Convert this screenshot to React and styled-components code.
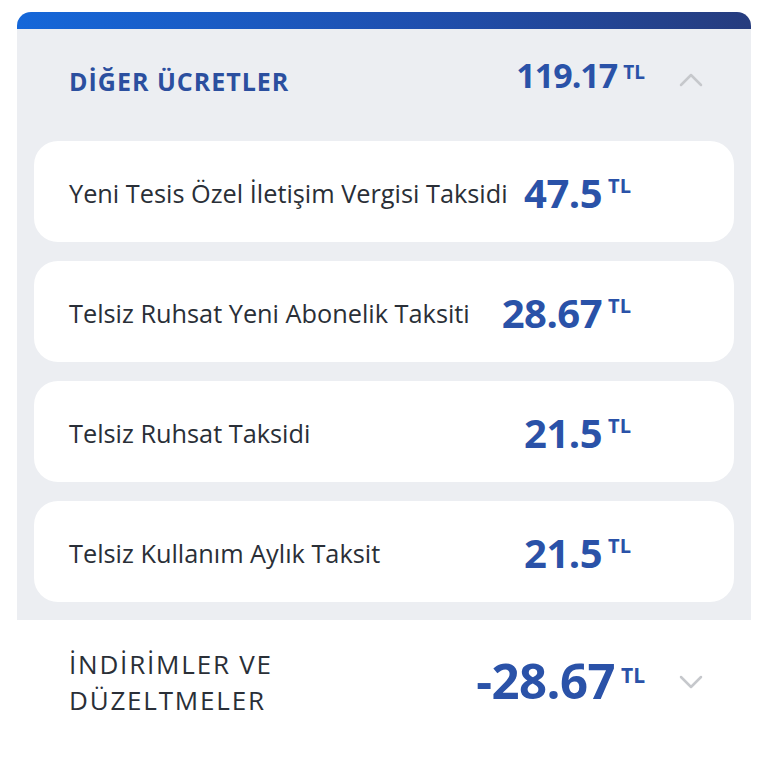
import React from 'react'
import styled, { createGlobalStyle } from 'styled-components'

const colors = {
  blue: '#2a52a8',
  navy: '#2b4f9f',
  text: '#2a2f37',
  panel: '#eceef2',
  chevron: '#c6c8cc',
}

const GlobalStyle = createGlobalStyle`
  body {
    margin: 0;
    background: #ffffff;
    font-family: "Open Sans", "Noto Sans", sans-serif;
    font-stretch: 92%;
    color: ${colors.text};
  }
`

const items = [
  { label: 'Yeni Tesis Özel İletişim Vergisi Taksidi', value: '47.5' },
  { label: 'Telsiz Ruhsat Yeni Abonelik Taksiti', value: '28.67' },
  { label: 'Telsiz Ruhsat Taksidi', value: '21.5' },
  { label: 'Telsiz Kullanım Aylık Taksit', value: '21.5' },
]

// value/unit font sizes, how far the group is raised, and how far TL sits below the digit tops
const sizes = {
  small: { value: 34, unit: 19, lift: 10, drop: 2, spacing: -1 },
  medium: { value: 40, unit: 20, lift: -3, drop: 0, spacing: -0.5 },
  large: { value: 49, unit: 21, lift: 3, drop: 4, spacing: -0.5 },
}

function Amount({ value, size = 'medium' }) {
  return (
    <AmountWrap $size={size}>
      <Value $size={size}>{value}</Value>
      <Unit $size={size}>TL</Unit>
    </AmountWrap>
  )
}

function Chevron({ up }) {
  return (
    <ChevronIcon width="24" height="14" viewBox="0 0 24 14" $up={up}>
      <polyline points="2,2 12,12 22,2" />
    </ChevronIcon>
  )
}

export default function App() {
  return (
    <Page>
      <GlobalStyle />
      <Section>
        <TopBar />
        <Panel>
          <HeaderRow>
            <Title>DİĞER ÜCRETLER</Title>
            <Amount value="119.17" size="small" />
            <Chevron up />
          </HeaderRow>
          <CardList>
            {items.map((item, i) => (
              <Card key={i}>
                <Label>{item.label}</Label>
                <Amount value={item.value} />
              </Card>
            ))}
          </CardList>
        </Panel>
        <FooterRow>
          <FooterTitle>
            İNDİRİMLER VE
            <br />
            DÜZELTMELER
          </FooterTitle>
          <Amount value="-28.67" size="large" />
          <Chevron />
        </FooterRow>
      </Section>
    </Page>
  )
}

const Page = styled.div`
  padding: 12px 17px 0;
`

const Section = styled.div`
  display: flex;
  flex-direction: column;
`

const TopBar = styled.div`
  height: 17px;
  border-radius: 14px 14px 0 0;
  background: linear-gradient(90deg, #1567d9 0%, #1f4fae 55%, #263c7e 100%);
`

const Panel = styled.div`
  background: ${colors.panel};
`

const HeaderRow = styled.div`
  display: flex;
  align-items: center;
  height: 102px;
  padding: 0 48px 0 52px;
`

const Title = styled.div`
  flex: 1;
  font-size: 25px;
  font-weight: 700;
  color: ${colors.navy};
  letter-spacing: 1px;
  margin-top: 2px;
`

const CardList = styled.div`
  display: flex;
  flex-direction: column;
  gap: 19px;
  padding: 10px 17px 18px;
`

const Card = styled.div`
  display: flex;
  align-items: center;
  justify-content: space-between;
  height: 101px;
  box-sizing: border-box;
  padding: 0 103px 0 35px;
  background: #ffffff;
  border-radius: 24px;
`

const Label = styled.div`
  font-size: 25.3px;
  font-weight: 400;
  color: ${colors.text};
  white-space: nowrap;
  margin-top: 3px;
`

const AmountWrap = styled.div`
  display: flex;
  align-items: flex-start;
  gap: 6px;
  margin-top: ${(p) => -sizes[p.$size].lift}px;
  color: ${colors.blue};
  font-weight: 700;
`

const Value = styled.span`
  font-size: ${(p) => sizes[p.$size].value}px;
  line-height: 1;
  font-stretch: 95%;
  letter-spacing: ${(p) => sizes[p.$size].spacing}px;
`

const Unit = styled.span`
  font-size: ${(p) => sizes[p.$size].unit}px;
  line-height: 1;
  margin-top: ${(p) => {
    const s = sizes[p.$size]
    return Math.round(0.174 * (s.value - s.unit)) + s.drop
  }}px;
`

const ChevronIcon = styled.svg`
  margin-left: 34px;
  flex-shrink: 0;
  transform: ${(p) => (p.$up ? 'rotate(180deg)' : 'none')};

  polyline {
    fill: none;
    stroke: ${colors.chevron};
    stroke-width: 2.5;
    stroke-linecap: round;
    stroke-linejoin: round;
  }
`

const FooterRow = styled.div`
  display: flex;
  align-items: center;
  padding: 26px 48px 30px 52px;
`

const FooterTitle = styled.div`
  flex: 1;
  font-size: 26px;
  font-weight: 500;
  line-height: 36px;
  letter-spacing: 1.8px;
  color: ${colors.text};
`
